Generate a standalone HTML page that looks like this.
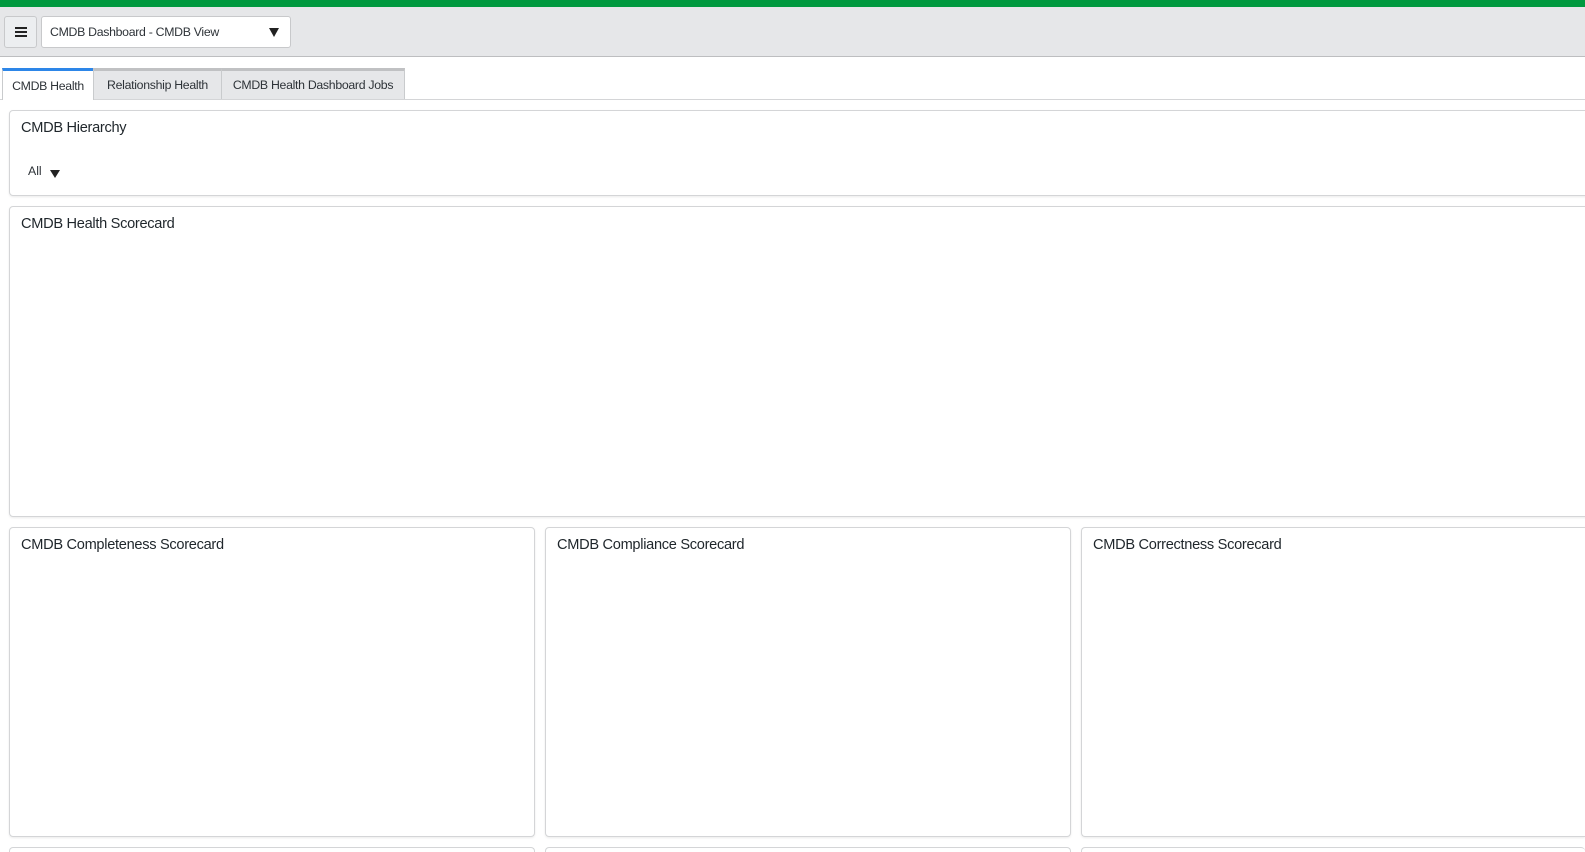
<!DOCTYPE html>
<html style="width:1585px;height:852px;overflow:hidden"><head><meta charset="utf-8"><style>
*{box-sizing:border-box;margin:0;padding:0}
body{width:1585px;height:852px;overflow:hidden;background:#fff;font-family:"Liberation Sans",sans-serif;color:#2e3338;position:relative}
#w{position:absolute;left:0;top:0;width:1585px;height:852px;overflow:hidden}
.a{position:absolute}
.card{position:absolute;background:#fff;border:1px solid #d4d5d7;border-radius:4px;box-shadow:0 1px 2px rgba(0,0,0,.08)}
.card h3{position:absolute;left:11px;top:9px;font-size:14.6px;font-weight:normal;letter-spacing:-0.3px;color:#1f262b}
.tab{position:absolute;top:68px;height:32px;font-size:12.3px;line-height:32px;text-align:center;border:1px solid #c9cbcd;border-bottom:none;letter-spacing:-0.3px}
.bc{position:absolute;top:847px;height:5px;background:#fff;border:1px solid #d4d5d7;border-bottom:none;border-radius:4px 4px 0 0}
</style></head><body><div id="w">
<div class="a" style="left:0;top:0;width:1585px;height:7px;background:#00993f"></div>
<div class="a" style="left:0;top:7px;width:1585px;height:50px;background:#e6e7e9;border-bottom:1px solid #bdbec0"></div>
<div class="a" style="left:4px;top:16px;width:33px;height:32px;border:1px solid #c8c9cb;border-radius:3px;background:#eceef0">
<div class="a" style="left:10px;top:10px;width:12px;height:2px;background:#222"></div>
<div class="a" style="left:10px;top:14px;width:12px;height:2px;background:#222"></div>
<div class="a" style="left:10px;top:18px;width:12px;height:2px;background:#222"></div></div>
<div class="a" style="left:41px;top:16px;width:250px;height:32px;border:1px solid #c8c9cb;border-radius:3px;background:#fff;font-size:12.3px;line-height:30px;padding-left:8px;letter-spacing:-0.3px">CMDB Dashboard - CMDB View
<div class="a" style="left:227px;top:11px;width:0;height:0;border-left:5px solid transparent;border-right:5px solid transparent;border-top:9px solid #222"></div></div>
<div class="a" style="left:0;top:99px;width:1585px;height:1px;background:#d4d5d7"></div>
<div class="tab" style="left:2px;width:92px;background:#fff;border-top:3px solid #2d86e8;line-height:30px;height:32px">CMDB Health</div>
<div class="tab" style="left:93px;width:129px;background:#e6e7e9;border-top:3px solid #c0c1c3;line-height:29px;height:31px">Relationship Health</div>
<div class="tab" style="left:221px;width:184px;background:#e6e7e9;border-top:3px solid #c0c1c3;line-height:29px;height:31px">CMDB Health Dashboard Jobs</div>
<div class="card" style="left:9px;top:110px;width:1600px;height:86px"><h3>CMDB Hierarchy</h3>
<div class="a" style="left:18px;top:53px;font-size:12.3px">All</div>
<div class="a" style="left:40px;top:59px;width:0;height:0;border-left:5px solid transparent;border-right:5px solid transparent;border-top:8px solid #222"></div></div>
<div class="card" style="left:9px;top:206px;width:1600px;height:311px"><h3>CMDB Health Scorecard</h3></div>
<div class="card" style="left:9px;top:527px;width:526px;height:310px"><h3>CMDB Completeness Scorecard</h3></div>
<div class="card" style="left:545px;top:527px;width:526px;height:310px"><h3>CMDB Compliance Scorecard</h3></div>
<div class="card" style="left:1081px;top:527px;width:504px;height:310px;border-right:none;border-radius:4px 0 0 4px"><h3>CMDB Correctness Scorecard</h3></div>
<div class="bc" style="left:9px;width:526px"></div>
<div class="bc" style="left:545px;width:526px"></div>
<div class="bc" style="left:1081px;width:504px;border-right:none"></div>
</div></body></html>
